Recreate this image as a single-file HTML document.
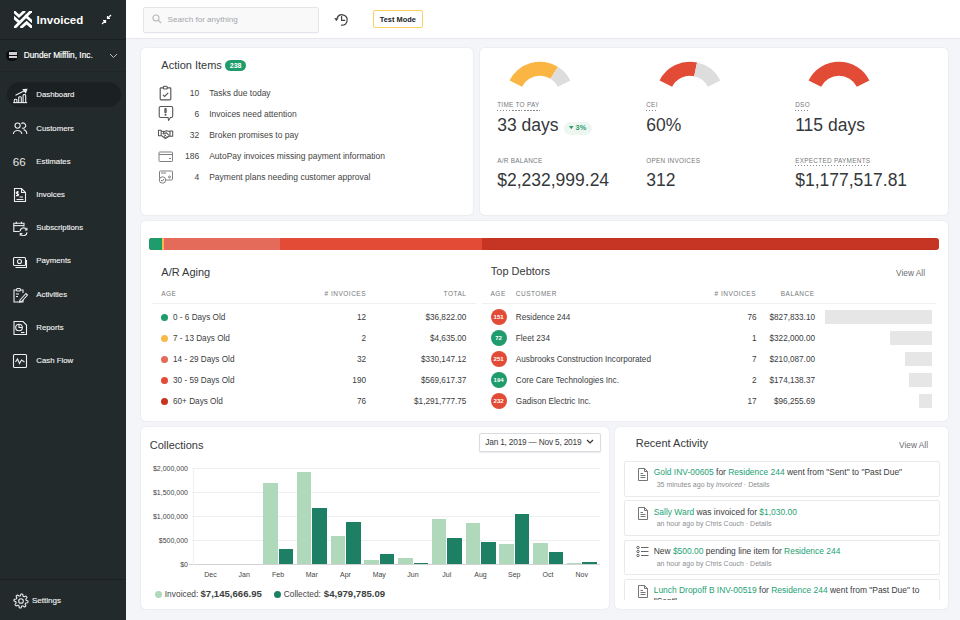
<!DOCTYPE html>
<html><head><meta charset="utf-8"><title>Invoiced Dashboard</title><style>
*{margin:0;padding:0;box-sizing:border-box}
html,body{width:960px;height:620px;overflow:hidden;background:#f4f5f9;font-family:"Liberation Sans",sans-serif}
.t{position:absolute;line-height:1;white-space:nowrap}
.b{position:absolute}
.card{position:absolute;background:#fff;border-radius:5px;box-shadow:0 0 0 1px #eceef2,0 1px 1px rgba(0,0,0,0.05)}
.lbl{text-transform:uppercase}
.g{color:#25a274}
</style></head>
<body>
<div class="b" style="left:0px;top:0px;width:126px;height:620px;background:#222a2b"></div>
<div class="b" style="left:0px;top:38.5px;width:126px;height:1px;background:#1b2123"></div>
<div class="b" style="left:0px;top:71px;width:126px;height:1px;background:#1f2528"></div>
<div class="b" style="left:0px;top:578.5px;width:126px;height:1px;background:#1b2123"></div>
<svg class="b" style="left:14.2px;top:11.2px;overflow:hidden" width="17.6" height="16.8" viewBox="0 0 17.6 16.8"><g stroke="#fff" stroke-width="2.8" fill="none" stroke-linecap="butt" stroke-linejoin="miter"><path d="M-0.5 17.8 L18 -0.8"/><path d="M-1 5.8 L6.6 12.4"/><path d="M18.6 11 L11 4.4"/><path d="M-1 -0.2 L5 5.2 L11 -0.2"/><path d="M6.6 17 L12.6 11.6 L18.6 17"/></g></svg>
<div class="t " style="top:14.67px;font-size:11.5px;color:#fff;font-weight:700;left:36.60px;">Invoiced</div>
<svg class="b" style="left:101px;top:14px;" width="11" height="11" viewBox="0 0 11 11"><g stroke="#fff" stroke-width="1.2" fill="none"><path d="M1 10 L4.5 6.5 M2 6.5 H4.5 V9"/><path d="M10 1 L6.5 4.5 M6.5 2 V4.5 H9"/></g></svg>
<div class="b" style="left:6.3px;top:49.8px;width:11.4px;height:11.6px;background:#0b0d0e;border-radius:50%"></div>
<div class="b" style="left:9px;top:52.3px;width:7.6px;height:2.4px;background:#d0d0d0"></div>
<div class="b" style="left:9px;top:55.5px;width:7.6px;height:2.4px;background:#d0d0d0"></div>
<div class="t " style="top:51.27px;font-size:8.3px;color:#fff;left:23.70px;-webkit-text-stroke:0.2px #fff;">Dunder Mifflin, Inc.</div>
<svg class="b" style="left:108.5px;top:52.5px;" width="9" height="6" viewBox="0 0 9 6"><path d="M1 1 L4.5 4.5 L8 1" stroke="#bbb" stroke-width="1" fill="none"/></svg>
<div class="b" style="left:6.5px;top:81.8px;width:114.5px;height:25.6px;background:#1b2123;border-radius:13px"></div>
<div class="t " style="top:91.40px;font-size:7.8px;color:#f2f2f2;left:36.30px;-webkit-text-stroke:0.12px #f2f2f2;">Dashboard</div>
<div class="t " style="top:124.60px;font-size:7.8px;color:#f2f2f2;left:36.30px;-webkit-text-stroke:0.12px #f2f2f2;">Customers</div>
<div class="t " style="top:157.80px;font-size:7.8px;color:#f2f2f2;left:36.30px;-webkit-text-stroke:0.12px #f2f2f2;">Estimates</div>
<div class="t " style="top:191.00px;font-size:7.8px;color:#f2f2f2;left:36.30px;-webkit-text-stroke:0.12px #f2f2f2;">Invoices</div>
<div class="t " style="top:224.20px;font-size:7.8px;color:#f2f2f2;left:36.30px;-webkit-text-stroke:0.12px #f2f2f2;">Subscriptions</div>
<div class="t " style="top:257.40px;font-size:7.8px;color:#f2f2f2;left:36.30px;-webkit-text-stroke:0.12px #f2f2f2;">Payments</div>
<div class="t " style="top:290.60px;font-size:7.8px;color:#f2f2f2;left:36.30px;-webkit-text-stroke:0.12px #f2f2f2;">Activities</div>
<div class="t " style="top:323.80px;font-size:7.8px;color:#f2f2f2;left:36.30px;-webkit-text-stroke:0.12px #f2f2f2;">Reports</div>
<div class="t " style="top:357.00px;font-size:7.8px;color:#f2f2f2;left:36.30px;-webkit-text-stroke:0.12px #f2f2f2;">Cash Flow</div>
<svg class="b" style="left:12px;top:87.5px;" width="16" height="16" viewBox="0 0 16 16"><g stroke="#eee" stroke-width="1.1" fill="none"><path d="M1.2 14.6 H15.2"/><path d="M2.3 14.6 V12 Q2.3 11.2 3.6 11.2 Q4.9 11.2 4.9 12 V14.6"/><path d="M6.7 14.6 V9.6 Q6.7 8.7 8 8.7 Q9.3 8.7 9.3 9.6 V14.6"/><path d="M11.1 14.6 V7.4 Q11.1 6.5 12.4 6.5 Q13.7 6.5 13.7 7.4 V14.6"/><path d="M3.5 7.3 L13 2.6"/><path d="M11.3 1.6 L14.8 1.3 L13.6 4.6 Z" fill="#eee"/></g></svg>
<svg class="b" style="left:12px;top:120.69999999999999px;" width="16" height="16" viewBox="0 0 16 16"><g stroke="#eee" stroke-width="1.1" fill="none"><circle cx="5.6" cy="4.6" r="2.6"/><path d="M1.4 13 C1.4 8.3 9.8 8.3 9.8 13"/><path d="M9.3 2.7 A2.6 2.6 0 1 1 10 7"/><path d="M11.6 8.6 C13.7 9.1 14.8 10.7 14.8 13"/></g></svg>
<div class="t" style="left:12.8px;top:156px;font-size:11.6px;color:#e8e8e8;letter-spacing:0px">66</div>
<svg class="b" style="left:12px;top:187.10000000000002px;" width="16" height="16" viewBox="0 0 16 16"><g stroke="#eee" stroke-width="1.1" fill="none"><path d="M2.5 1.5 H9.5 L13.5 5.5 V14.5 H2.5 Z"/><path d="M9.5 1.5 V5.5 H13.5"/><path d="M4.5 12.5 H11.5"/><path d="M7.5 10 H11"/><path d="M5.5 4 V9 M7 5 H4.8 C4 5 4 7 5.5 6.8 C7 6.8 7 9 5.5 8.6 H4"/></g></svg>
<svg class="b" style="left:12px;top:220.3px;" width="16" height="16" viewBox="0 0 16 16"><g stroke="#eee" stroke-width="1.1" fill="none"><path d="M7.6 11.5 H1.8 V3.2 H12 V6.5"/><path d="M1.8 5.6 H12"/><path d="M4.3 1.8 V4 M9.5 1.8 V4"/><path d="M8.1 11.2 A3.5 3.5 0 0 1 14.6 9.6"/><path d="M15 12.4 A3.5 3.5 0 0 1 8.5 14"/><path d="M14.9 7.8 V10 H12.8" /><path d="M8.3 15.8 V13.5 H10.4"/></g></svg>
<svg class="b" style="left:12px;top:253.5px;" width="16" height="16" viewBox="0 0 16 16"><g stroke="#eee" stroke-width="1.1" fill="none"><rect x="1.5" y="3.5" width="12" height="8" rx="1"/><circle cx="7.5" cy="7.5" r="2"/><path d="M3.5 13.5 H14.5 V6"/></g></svg>
<svg class="b" style="left:12px;top:286.70000000000005px;" width="16" height="16" viewBox="0 0 16 16"><g stroke="#eee" stroke-width="1.1" fill="none"><path d="M4 3 H2 V15 H11 V13"/><path d="M9 3 H11 V6"/><rect x="4.5" y="1.5" width="4" height="2.5" rx="1"/><path d="M4 7 H7 M4 9.5 H6"/><path d="M8 13 L14 6.5 L15.5 8 L9.5 14.5 L7.5 15 Z"/></g></svg>
<svg class="b" style="left:12px;top:319.90000000000003px;" width="16" height="16" viewBox="0 0 16 16"><g stroke="#eee" stroke-width="1.1" fill="none"><path d="M2 1.5 H11 L14.5 5 V14.5 H2 Z"/><circle cx="7" cy="7.5" r="3.3"/><path d="M7 4.2 V7.5 H10.3"/><path d="M9 12.5 H12.5"/></g></svg>
<svg class="b" style="left:12px;top:353.1px;" width="16" height="16" viewBox="0 0 16 16"><g stroke="#eee" stroke-width="1.1" fill="none"><rect x="1.5" y="1.5" width="13" height="13" rx="1"/><path d="M3.5 9 L5.5 6 L7.5 10.5 L9.5 7 L12.5 9"/></g></svg>
<svg class="b" style="left:12.5px;top:592.5px;" width="16" height="16" viewBox="0 0 16 16"><g stroke="#eee" stroke-width="1.1" fill="none"><polygon points="15.00,8.00 14.94,8.91 14.76,9.81 12.80,9.99 12.50,10.60 12.13,11.17 12.95,12.95 12.26,13.55 11.50,14.06 9.99,12.80 9.35,13.02 8.68,13.16 8.00,15.00 7.09,14.94 6.19,14.76 6.01,12.80 5.40,12.50 4.83,12.13 3.05,12.95 2.45,12.26 1.94,11.50 3.20,9.99 2.98,9.35 2.84,8.68 1.00,8.00 1.06,7.09 1.24,6.19 3.20,6.01 3.50,5.40 3.87,4.83 3.05,3.05 3.74,2.45 4.50,1.94 6.01,3.20 6.65,2.98 7.32,2.84 8.00,1.00 8.91,1.06 9.81,1.24 9.99,3.20 10.60,3.50 11.17,3.87 12.95,3.05 13.55,3.74 14.06,4.50 12.80,6.01 13.02,6.65 13.16,7.32" stroke-linejoin="round"/><circle cx="8" cy="8" r="2.3"/></g></svg>
<div class="t " style="top:596.74px;font-size:8.1px;color:#f2f2f2;left:31.90px;-webkit-text-stroke:0.12px #f2f2f2;">Settings</div>
<div class="b" style="left:126px;top:0px;width:834px;height:39px;background:#fff;border-bottom:1px solid #e6e8ec"></div>
<div class="b" style="left:143px;top:7px;width:176px;height:26px;background:#f9f9fa;border:1px solid #e4e5e8;border-radius:2px;box-shadow:0 1px 1px rgba(0,0,0,0.03)"></div>
<svg class="b" style="left:152px;top:13.5px;" width="10" height="10" viewBox="0 0 10 10"><circle cx="4" cy="4" r="3" stroke="#b8b9bb" stroke-width="1.1" fill="none"/><path d="M6.2 6.2 L9 9" stroke="#b8b9bb" stroke-width="1.2"/></svg>
<div class="t " style="top:16.14px;font-size:8.1px;color:#a4a6a9;left:167.50px;">Search for anything</div>
<svg class="b" style="left:330px;top:8px;" width="22" height="22" viewBox="0 0 22 22"><g stroke="#444" stroke-width="1.2" fill="none" stroke-linecap="round"><path d="M7.3 9.6 A5.2 5.2 0 1 1 11.6 17.2"/><path d="M11.6 8.4 V12.3 H14.8"/></g><path d="M4.4 9.9 L8.6 10.3 L6.2 13.3 Z" fill="#444"/></svg>
<div class="b" style="left:373px;top:10.3px;width:50px;height:17.3px;border:1px solid #fbd161;border-radius:2px;background:#fff"></div>
<div class="t " style="top:15.54px;font-size:7.4px;color:#222;font-weight:700;left:197.80px;width:400px;text-align:center;">Test Mode</div>
<div class="card" style="left:141px;top:48px;width:332px;height:167px"></div>
<div class="t " style="top:59.89px;font-size:11px;color:#36383a;left:161.30px;">Action Items</div>
<div class="b" style="left:225.3px;top:60.2px;width:20.5px;height:10.6px;background:#1f9c6b;border-radius:6px"></div>
<div class="t " style="top:62.27px;font-size:7px;color:#fff;font-weight:700;left:35.60px;width:400px;text-align:center;">238</div>
<div class="t " style="top:89.40px;font-size:8.5px;color:#444;right:760.80px;">10</div>
<div class="t " style="top:89.40px;font-size:8.5px;color:#444;left:209.20px;">Tasks due today</div>
<div class="t " style="top:110.40px;font-size:8.5px;color:#444;right:760.80px;">6</div>
<div class="t " style="top:110.40px;font-size:8.5px;color:#444;left:209.20px;">Invoices need attention</div>
<div class="t " style="top:131.40px;font-size:8.5px;color:#444;right:760.80px;">32</div>
<div class="t " style="top:131.40px;font-size:8.5px;color:#444;left:209.20px;">Broken promises to pay</div>
<div class="t " style="top:152.40px;font-size:8.5px;color:#444;right:760.80px;">186</div>
<div class="t " style="top:152.40px;font-size:8.5px;color:#444;left:209.20px;">AutoPay invoices missing payment information</div>
<div class="t " style="top:173.40px;font-size:8.5px;color:#444;right:760.80px;">4</div>
<div class="t " style="top:173.40px;font-size:8.5px;color:#444;left:209.20px;">Payment plans needing customer approval</div>
<svg class="b" style="left:159px;top:85px;" width="13" height="16" viewBox="0 0 13 16"><g stroke="#555" stroke-width="1.15" fill="none"><rect x="1.2" y="2.8" width="10.6" height="12" rx="0.8"/><rect x="4.4" y="1.2" width="3.9" height="2.8" rx="1" fill="#fff"/><path d="M3.9 9.9 L5.6 11.4 L9.2 7.8"/></g></svg>
<svg class="b" style="left:158px;top:105px;" width="16" height="16" viewBox="0 0 16 16"><g stroke="#555" stroke-width="1.1" fill="none"><path d="M2.7 1.5 H13.2 Q14.7 1.5 14.7 3 V11 Q14.7 12.5 13.2 12.5 H12.4 L10.6 15.2 L10 12.5 H2.7 Q1.2 12.5 1.2 11 V3 Q1.2 1.5 2.7 1.5 Z"/><rect x="6.9" y="3.6" width="1.2" height="4.2" rx="0.5"/><circle cx="7.5" cy="9.7" r="0.5"/></g></svg>
<svg class="b" style="left:155px;top:126px;" width="21" height="16" viewBox="0 0 21 16"><g stroke="#555" stroke-width="1.05" fill="none" stroke-linejoin="round"><rect x="3.5" y="4.2" width="2.7" height="5.6"/><rect x="15" y="4.9" width="2.7" height="5.4"/><path d="M6.2 5.3 L9.3 5.6 L11.5 4.8 L15 5.5"/><path d="M6.2 9.3 L10.3 12.5 L15 9.7"/><path d="M9.3 5.6 L8 7.6 C9 8.6 10.3 7.3 11.2 6.6 L14 9.3"/><path d="M8.8 10.6 L11 8.8 M10.5 11.8 L12.5 10.3"/></g></svg>
<svg class="b" style="left:158px;top:150.5px;" width="15" height="11" viewBox="0 0 15 11"><g stroke="#808080" stroke-width="1" fill="none"><rect x="1" y="1" width="13.5" height="9.5" rx="0.7"/><path d="M1 3.5 H14.5"/><path d="M11 7.5 H13"/></g></svg>
<svg class="b" style="left:158px;top:170px;" width="15" height="14" viewBox="0 0 15 14"><g stroke="#808080" stroke-width="1" fill="none"><rect x="1.5" y="1" width="13" height="9" rx="0.7"/><path d="M3 3 H8"/><circle cx="11.5" cy="7" r="1"/><circle cx="4.5" cy="10" r="3.2" fill="#fff"/><path d="M3 10 L4.2 11.2 L6 9"/></g></svg>
<div class="card" style="left:480px;top:48px;width:468px;height:167px"></div>
<svg class="b" style="left:500px;top:50px;" width="80" height="40" viewBox="0 0 80 40"><path d="M9.57 30.53 A34 34 0 0 1 57.89 16.79 L50.52 28.69 A20 20 0 0 0 22.10 36.78 Z" fill="#fbb543"/><path d="M57.89 16.79 A34 34 0 0 1 70.43 30.53 L57.90 36.78 A20 20 0 0 0 50.52 28.69 Z" fill="#dddddd"/></svg>
<svg class="b" style="left:649.7px;top:50px;" width="80" height="40" viewBox="0 0 80 40"><path d="M9.57 30.53 A34 34 0 0 1 47.03 12.44 L44.14 26.13 A20 20 0 0 0 22.10 36.78 Z" fill="#e24b36"/><path d="M47.03 12.44 A34 34 0 0 1 70.43 30.53 L57.90 36.78 A20 20 0 0 0 44.14 26.13 Z" fill="#dddddd"/></svg>
<svg class="b" style="left:798.9px;top:50px;" width="80" height="40" viewBox="0 0 80 40"><path d="M9.57 30.53 A34 34 0 0 1 70.43 30.53 L57.90 36.78 A20 20 0 0 0 22.10 36.78 Z" fill="#e24b36"/></svg>
<div class="t " style="top:102.38px;font-size:6.4px;color:#76787b;letter-spacing:0.28px;left:497.20px;padding-bottom:2px;background-image:repeating-linear-gradient(90deg,#8a8c8f 0 1.5px,transparent 1.5px 3px);background-size:100% 1px;background-repeat:no-repeat;background-position:0 100%;">TIME TO PAY</div>
<div class="t " style="top:116.69px;font-size:17.5px;color:#35383b;left:497.20px;">33 days</div>
<div class="t " style="top:157.98px;font-size:6.4px;color:#76787b;letter-spacing:0.28px;left:497.20px;">A/R BALANCE</div>
<div class="t " style="top:171.79px;font-size:17.5px;color:#35383b;left:497.20px;">$2,232,999.24</div>
<div class="t " style="top:102.38px;font-size:6.4px;color:#76787b;letter-spacing:0.28px;left:646.20px;padding-bottom:2px;background-image:repeating-linear-gradient(90deg,#8a8c8f 0 1.5px,transparent 1.5px 3px);background-size:100% 1px;background-repeat:no-repeat;background-position:0 100%;">CEI</div>
<div class="t " style="top:116.69px;font-size:17.5px;color:#35383b;left:646.20px;">60%</div>
<div class="t " style="top:157.98px;font-size:6.4px;color:#76787b;letter-spacing:0.28px;left:646.20px;">OPEN INVOICES</div>
<div class="t " style="top:171.79px;font-size:17.5px;color:#35383b;left:646.20px;">312</div>
<div class="t " style="top:102.38px;font-size:6.4px;color:#76787b;letter-spacing:0.28px;left:795.20px;padding-bottom:2px;background-image:repeating-linear-gradient(90deg,#8a8c8f 0 1.5px,transparent 1.5px 3px);background-size:100% 1px;background-repeat:no-repeat;background-position:0 100%;">DSO</div>
<div class="t " style="top:116.69px;font-size:17.5px;color:#35383b;left:795.20px;">115 days</div>
<div class="t " style="top:157.98px;font-size:6.4px;color:#76787b;letter-spacing:0.28px;left:795.20px;padding-bottom:2px;background-image:repeating-linear-gradient(90deg,#8a8c8f 0 1.5px,transparent 1.5px 3px);background-size:100% 1px;background-repeat:no-repeat;background-position:0 100%;">EXPECTED PAYMENTS</div>
<div class="t " style="top:171.79px;font-size:17.5px;color:#35383b;left:795.20px;">$1,177,517.81</div>
<div class="b" style="left:564px;top:121.5px;width:28px;height:13.5px;background:#eef6f1;border-radius:7px"></div>
<svg class="b" style="left:569px;top:126px;" width="5" height="3.2" viewBox="0 0 5 3.2"><path d="M0 0 H4.5 L2.25 3.2 Z" fill="#1f9c6b"/></svg>
<div class="t " style="top:124.42px;font-size:7.3px;color:#2a9d6a;font-weight:700;left:575.60px;">3%</div>
<div class="card" style="left:141px;top:221px;width:807px;height:200px"></div>
<div class="b" style="left:149px;top:238px;width:790px;height:12px;border-radius:3px;overflow:hidden;background:#c63423"><div class="b" style="left:0;top:0;width:13px;height:12px;background:#1f9c6b"></div><div class="b" style="left:13px;top:0;width:2px;height:12px;background:#f9b84a"></div><div class="b" style="left:15px;top:0;width:116px;height:12px;background:#e46a5a"></div><div class="b" style="left:131px;top:0;width:202px;height:12px;background:#e34b37"></div></div>
<div class="t " style="top:266.69px;font-size:11px;color:#36383a;left:161.30px;">A/R Aging</div>
<div class="t " style="top:291.00px;font-size:6.5px;color:#76787b;letter-spacing:0.5px;left:161.20px;">AGE</div>
<div class="t " style="top:291.00px;font-size:6.5px;color:#76787b;letter-spacing:0.5px;right:594.00px;"># INVOICES</div>
<div class="t " style="top:291.00px;font-size:6.5px;color:#76787b;letter-spacing:0.5px;right:493.60px;">TOTAL</div>
<div class="b" style="left:151.7px;top:303px;width:324.3px;height:1px;background:#eeeff1"></div>
<div class="b" style="left:160.8px;top:314.1px;width:7px;height:7px;background:#1f9c6b;border-radius:50%"></div>
<div class="t " style="top:313.86px;font-size:8.2px;color:#3a3c3e;left:173.00px;">0 - 6 Days Old</div>
<div class="t " style="top:313.86px;font-size:8.2px;color:#3a3c3e;right:594.00px;">12</div>
<div class="t " style="top:313.86px;font-size:8.2px;color:#3a3c3e;right:493.60px;">$36,822.00</div>
<div class="b" style="left:160.8px;top:335.1px;width:7px;height:7px;background:#f9b84a;border-radius:50%"></div>
<div class="t " style="top:334.86px;font-size:8.2px;color:#3a3c3e;left:173.00px;">7 - 13 Days Old</div>
<div class="t " style="top:334.86px;font-size:8.2px;color:#3a3c3e;right:594.00px;">2</div>
<div class="t " style="top:334.86px;font-size:8.2px;color:#3a3c3e;right:493.60px;">$4,635.00</div>
<div class="b" style="left:160.8px;top:356.1px;width:7px;height:7px;background:#e46a5a;border-radius:50%"></div>
<div class="t " style="top:355.86px;font-size:8.2px;color:#3a3c3e;left:173.00px;">14 - 29 Days Old</div>
<div class="t " style="top:355.86px;font-size:8.2px;color:#3a3c3e;right:594.00px;">32</div>
<div class="t " style="top:355.86px;font-size:8.2px;color:#3a3c3e;right:493.60px;">$330,147.12</div>
<div class="b" style="left:160.8px;top:377.1px;width:7px;height:7px;background:#e34b37;border-radius:50%"></div>
<div class="t " style="top:376.86px;font-size:8.2px;color:#3a3c3e;left:173.00px;">30 - 59 Days Old</div>
<div class="t " style="top:376.86px;font-size:8.2px;color:#3a3c3e;right:594.00px;">190</div>
<div class="t " style="top:376.86px;font-size:8.2px;color:#3a3c3e;right:493.60px;">$569,617.37</div>
<div class="b" style="left:160.8px;top:398.1px;width:7px;height:7px;background:#c63423;border-radius:50%"></div>
<div class="t " style="top:397.86px;font-size:8.2px;color:#3a3c3e;left:173.00px;">60+ Days Old</div>
<div class="t " style="top:397.86px;font-size:8.2px;color:#3a3c3e;right:594.00px;">76</div>
<div class="t " style="top:397.86px;font-size:8.2px;color:#3a3c3e;right:493.60px;">$1,291,777.75</div>
<div class="t " style="top:265.99px;font-size:11px;color:#36383a;left:490.80px;">Top Debtors</div>
<div class="t " style="top:268.97px;font-size:8.3px;color:#6b6d70;right:35.00px;">View All</div>
<div class="t " style="top:290.80px;font-size:6.5px;color:#76787b;letter-spacing:0.5px;left:490.50px;">AGE</div>
<div class="t " style="top:290.80px;font-size:6.5px;color:#76787b;letter-spacing:0.5px;left:515.80px;">CUSTOMER</div>
<div class="t " style="top:290.80px;font-size:6.5px;color:#76787b;letter-spacing:0.5px;right:204.00px;"># INVOICES</div>
<div class="t " style="top:290.80px;font-size:6.5px;color:#76787b;letter-spacing:0.5px;right:145.40px;">BALANCE</div>
<div class="b" style="left:481.7px;top:303px;width:454px;height:1px;background:#eeeff1"></div>
<div class="b" style="left:490.5px;top:309.20000000000005px;width:16px;height:16px;background:#e24b36;border-radius:50%"></div>
<div class="t " style="top:314.24px;font-size:6.1px;color:#fff;font-weight:700;left:298.60px;width:400px;text-align:center;">151</div>
<div class="t " style="top:313.66px;font-size:8.2px;color:#3a3c3e;left:515.80px;">Residence 244</div>
<div class="t " style="top:313.66px;font-size:8.2px;color:#3a3c3e;right:203.50px;">76</div>
<div class="t " style="top:313.66px;font-size:8.2px;color:#3a3c3e;right:145.00px;">$827,833.10</div>
<div class="b" style="left:824.8px;top:310.30000000000007px;width:107.0px;height:14px;background:#e6e6e7"></div>
<div class="b" style="left:490.5px;top:330.20000000000005px;width:16px;height:16px;background:#1f9c6b;border-radius:50%"></div>
<div class="t " style="top:335.24px;font-size:6.1px;color:#fff;font-weight:700;left:298.60px;width:400px;text-align:center;">72</div>
<div class="t " style="top:334.66px;font-size:8.2px;color:#3a3c3e;left:515.80px;">Fleet 234</div>
<div class="t " style="top:334.66px;font-size:8.2px;color:#3a3c3e;right:203.50px;">1</div>
<div class="t " style="top:334.66px;font-size:8.2px;color:#3a3c3e;right:145.00px;">$322,000.00</div>
<div class="b" style="left:890.1804996441915px;top:331.30000000000007px;width:41.619500355808434px;height:14px;background:#e6e6e7"></div>
<div class="b" style="left:490.5px;top:351.20000000000005px;width:16px;height:16px;background:#e24b36;border-radius:50%"></div>
<div class="t " style="top:356.24px;font-size:6.1px;color:#fff;font-weight:700;left:298.60px;width:400px;text-align:center;">251</div>
<div class="t " style="top:355.66px;font-size:8.2px;color:#3a3c3e;left:515.80px;">Ausbrooks Construction Incorporated</div>
<div class="t " style="top:355.66px;font-size:8.2px;color:#3a3c3e;right:203.50px;">7</div>
<div class="t " style="top:355.66px;font-size:8.2px;color:#3a3c3e;right:145.00px;">$210,087.00</div>
<div class="b" style="left:904.6456025737555px;top:352.30000000000007px;width:27.154397426244493px;height:14px;background:#e6e6e7"></div>
<div class="b" style="left:490.5px;top:372.20000000000005px;width:16px;height:16px;background:#1f9c6b;border-radius:50%"></div>
<div class="t " style="top:377.24px;font-size:6.1px;color:#fff;font-weight:700;left:298.60px;width:400px;text-align:center;">194</div>
<div class="t " style="top:376.66px;font-size:8.2px;color:#3a3c3e;left:515.80px;">Core Care Technologies Inc.</div>
<div class="t " style="top:376.66px;font-size:8.2px;color:#3a3c3e;right:203.50px;">2</div>
<div class="t " style="top:376.66px;font-size:8.2px;color:#3a3c3e;right:145.00px;">$174,138.37</div>
<div class="b" style="left:909.2920746826866px;top:373.30000000000007px;width:22.507925317313358px;height:14px;background:#e6e6e7"></div>
<div class="b" style="left:490.5px;top:393.20000000000005px;width:16px;height:16px;background:#e24b36;border-radius:50%"></div>
<div class="t " style="top:398.24px;font-size:6.1px;color:#fff;font-weight:700;left:298.60px;width:400px;text-align:center;">232</div>
<div class="t " style="top:397.66px;font-size:8.2px;color:#3a3c3e;left:515.80px;">Gadison Electric Inc.</div>
<div class="t " style="top:397.66px;font-size:8.2px;color:#3a3c3e;right:203.50px;">17</div>
<div class="t " style="top:397.66px;font-size:8.2px;color:#3a3c3e;right:145.00px;">$96,255.69</div>
<div class="b" style="left:919.3586530304236px;top:394.30000000000007px;width:12.441346969576356px;height:14px;background:#e6e6e7"></div>
<div class="card" style="left:141px;top:427px;width:468px;height:182px"></div>
<div class="t " style="top:439.89px;font-size:11px;color:#36383a;left:149.70px;">Collections</div>
<div class="b" style="left:478.5px;top:433px;width:122px;height:18.5px;border:1px solid #d9dbde;border-radius:2px;background:#fff;box-shadow:0 1px 1px #e8eaee"></div>
<div class="t " style="top:438.27px;font-size:8.3px;color:#3a3c3e;letter-spacing:-0.2px;left:485.30px;">Jan 1, 2019 — Nov 5, 2019</div>
<svg class="b" style="left:585.5px;top:439px;" width="8" height="5.5" viewBox="0 0 8 5.5"><path d="M1 1 L4 4 L7 1" stroke="#333" stroke-width="1.2" fill="none"/></svg>
<div class="b" style="left:191.5px;top:468.25px;width:408px;height:1px;background:#efefef"></div>
<div class="t " style="top:465.42px;font-size:7px;color:#444;right:772.00px;">$2,000,000</div>
<div class="b" style="left:191.5px;top:492.0px;width:408px;height:1px;background:#efefef"></div>
<div class="t " style="top:489.17px;font-size:7px;color:#444;right:772.00px;">$1,500,000</div>
<div class="b" style="left:191.5px;top:515.75px;width:408px;height:1px;background:#efefef"></div>
<div class="t " style="top:512.92px;font-size:7px;color:#444;right:772.00px;">$1,000,000</div>
<div class="b" style="left:191.5px;top:539.5px;width:408px;height:1px;background:#efefef"></div>
<div class="t " style="top:536.67px;font-size:7px;color:#444;right:772.00px;">$500,000</div>
<div class="b" style="left:191.5px;top:563.75px;width:408px;height:1px;background:#efefef"></div>
<div class="t " style="top:560.92px;font-size:7px;color:#444;right:772.00px;">$0</div>
<div class="b" style="left:188.5px;top:563.75px;width:411px;height:1px;background:#d2d3d5"></div>
<div class="b" style="left:193px;top:468.5px;width:1px;height:96px;background:#efefef"></div>
<div class="t " style="top:571.07px;font-size:7px;color:#444;left:10.50px;width:400px;text-align:center;">Dec</div>
<div class="t " style="top:571.07px;font-size:7px;color:#444;left:44.25px;width:400px;text-align:center;">Jan</div>
<div class="t " style="top:571.07px;font-size:7px;color:#444;left:78.00px;width:400px;text-align:center;">Feb</div>
<div class="b" style="left:263.23px;top:483.27px;width:14.3px;height:80.98px;background:#b0d8bb"></div>
<div class="b" style="left:278.73px;top:548.73px;width:14.3px;height:15.52px;background:#1d7f64"></div>
<div class="t " style="top:571.07px;font-size:7px;color:#444;left:111.75px;width:400px;text-align:center;">Mar</div>
<div class="b" style="left:296.98px;top:471.76px;width:14.3px;height:92.49px;background:#b0d8bb"></div>
<div class="b" style="left:312.48px;top:508.0px;width:14.3px;height:56.25px;background:#1d7f64"></div>
<div class="t " style="top:571.07px;font-size:7px;color:#444;left:145.50px;width:400px;text-align:center;">Apr</div>
<div class="b" style="left:330.73px;top:535.74px;width:14.3px;height:28.51px;background:#b0d8bb"></div>
<div class="b" style="left:346.23px;top:521.75px;width:14.3px;height:42.5px;background:#1d7f64"></div>
<div class="t " style="top:571.07px;font-size:7px;color:#444;left:179.25px;width:400px;text-align:center;">May</div>
<div class="b" style="left:364.48px;top:560.0px;width:14.3px;height:4.25px;background:#b0d8bb"></div>
<div class="b" style="left:379.98px;top:554.27px;width:14.3px;height:9.98px;background:#1d7f64"></div>
<div class="t " style="top:571.07px;font-size:7px;color:#444;left:213.00px;width:400px;text-align:center;">Jun</div>
<div class="b" style="left:398.23px;top:557.99px;width:14.3px;height:6.26px;background:#b0d8bb"></div>
<div class="b" style="left:413.73px;top:563.01px;width:14.3px;height:1.24px;background:#1d7f64"></div>
<div class="t " style="top:571.07px;font-size:7px;color:#444;left:246.75px;width:400px;text-align:center;">Jul</div>
<div class="b" style="left:431.98px;top:518.74px;width:14.3px;height:45.51px;background:#b0d8bb"></div>
<div class="b" style="left:447.48px;top:537.99px;width:14.3px;height:26.26px;background:#1d7f64"></div>
<div class="t " style="top:571.07px;font-size:7px;color:#444;left:280.50px;width:400px;text-align:center;">Aug</div>
<div class="b" style="left:465.73px;top:523.23px;width:14.3px;height:41.02px;background:#b0d8bb"></div>
<div class="b" style="left:481.23px;top:542.0px;width:14.3px;height:22.25px;background:#1d7f64"></div>
<div class="t " style="top:571.07px;font-size:7px;color:#444;left:314.25px;width:400px;text-align:center;">Sep</div>
<div class="b" style="left:499.48px;top:544.24px;width:14.3px;height:20.01px;background:#b0d8bb"></div>
<div class="b" style="left:514.98px;top:514.26px;width:14.3px;height:49.99px;background:#1d7f64"></div>
<div class="t " style="top:571.07px;font-size:7px;color:#444;left:348.00px;width:400px;text-align:center;">Oct</div>
<div class="b" style="left:533.23px;top:543.0px;width:14.3px;height:21.25px;background:#b0d8bb"></div>
<div class="b" style="left:548.73px;top:551.74px;width:14.3px;height:12.51px;background:#1d7f64"></div>
<div class="t " style="top:571.07px;font-size:7px;color:#444;left:381.75px;width:400px;text-align:center;">Nov</div>
<div class="b" style="left:566.98px;top:563.01px;width:14.3px;height:1.24px;background:#b0d8bb"></div>
<div class="b" style="left:582.48px;top:562.01px;width:14.3px;height:2.24px;background:#1d7f64"></div>
<div class="b" style="left:155.2px;top:591px;width:7px;height:7px;background:#b0d8bb;border-radius:50%"></div>
<div class="t " style="top:590.39px;font-size:8.4px;color:#444;left:164.80px;">Invoiced:</div>
<div class="t " style="top:588.87px;font-size:9.6px;color:#3d3f41;font-weight:700;left:200.50px;">$7,145,666.95</div>
<div class="b" style="left:273.7px;top:591px;width:7px;height:7px;background:#1d7f64;border-radius:50%"></div>
<div class="t " style="top:590.39px;font-size:8.4px;color:#444;left:283.70px;">Collected:</div>
<div class="t " style="top:588.87px;font-size:9.6px;color:#3d3f41;font-weight:700;left:323.80px;">$4,979,785.09</div>
<div class="card" style="left:615px;top:427px;width:333px;height:182px"></div>
<div class="t " style="top:437.69px;font-size:11px;color:#36383a;left:635.80px;">Recent Activity</div>
<div class="t " style="top:440.57px;font-size:8.3px;color:#6b6d70;right:32.00px;">View All</div>
<div class="b" style="left:616px;top:455px;width:332px;height:145px;overflow:hidden">
<div class="b" style="left:8.2px;top:6px;width:315.6px;height:35.5px;border:1px solid #e9eaec;border-radius:2px;background:#fff"></div>
<svg class="b" style="left:20.5px;top:12.5px" width="12" height="13" viewBox="0 0 12 13"><g stroke="#666" stroke-width="0.9" fill="none"><path d="M1.5 0.5 H7.5 L10.5 3.5 V12.5 H1.5 Z"/><path d="M7.5 0.5 V3.5 H10.5"/><path d="M3.5 5.5 H6 M3.5 7.5 H8.5 M3.5 9.5 H8.5"/></g></svg>
<div class="t" style="left:37.7px;top:13.35px;font-size:8.45px;color:#3a3c3e"><span class="g">Gold INV-00605</span> for <span class="g">Residence 244</span> went from "Sent" to "Past Due"</div>
<div class="t" style="left:40.7px;top:26.07px;font-size:7.0px;color:#8b8d90">35 minutes ago by <i>Invoiced</i> · Details</div>
<div class="b" style="left:8.2px;top:45.30000000000001px;width:315.6px;height:35.5px;border:1px solid #e9eaec;border-radius:2px;background:#fff"></div>
<svg class="b" style="left:20.5px;top:51.80000000000001px" width="12" height="13" viewBox="0 0 12 13"><g stroke="#666" stroke-width="0.9" fill="none"><path d="M1.5 0.5 H7.5 L10.5 3.5 V12.5 H1.5 Z"/><path d="M7.5 0.5 V3.5 H10.5"/><path d="M3.5 5.5 H6 M3.5 7.5 H8.5 M3.5 9.5 H8.5"/></g></svg>
<div class="t" style="left:37.7px;top:52.65px;font-size:8.45px;color:#3a3c3e"><span class="g">Sally Ward</span> was invoiced for <span class="g">$1,030.00</span></div>
<div class="t" style="left:40.7px;top:65.37px;font-size:7.0px;color:#8b8d90">an hour ago by Chris Couch · Details</div>
<div class="b" style="left:8.2px;top:84.60000000000002px;width:315.6px;height:35.5px;border:1px solid #e9eaec;border-radius:2px;background:#fff"></div>
<svg class="b" style="left:19.5px;top:90.10000000000002px" width="13" height="13" viewBox="0 0 13 13"><g stroke="#555" stroke-width="0.9" fill="none"><circle cx="2" cy="2.5" r="1.2"/><circle cx="2" cy="6.5" r="1.2"/><circle cx="2" cy="10.5" r="1.2"/><path d="M5 2.5 H12.5 M5 6.5 H12.5 M5 10.5 H12.5"/></g></svg>
<div class="t" style="left:37.7px;top:91.95px;font-size:8.45px;color:#3a3c3e">New <span class="g">$500.00</span> pending line item for <span class="g">Residence 244</span></div>
<div class="t" style="left:40.7px;top:104.67px;font-size:7.0px;color:#8b8d90">an hour ago by Chris Couch · Details</div>
<div class="b" style="left:8.2px;top:123.5px;width:315.6px;height:35.5px;border:1px solid #e9eaec;border-radius:2px;background:#fff"></div>
<svg class="b" style="left:20.5px;top:130.0px" width="12" height="13" viewBox="0 0 12 13"><g stroke="#666" stroke-width="0.9" fill="none"><path d="M1.5 0.5 H7.5 L10.5 3.5 V12.5 H1.5 Z"/><path d="M7.5 0.5 V3.5 H10.5"/><path d="M3.5 5.5 H6 M3.5 7.5 H8.5 M3.5 9.5 H8.5"/></g></svg>
<div class="t" style="left:37.7px;top:130.85px;font-size:8.45px;color:#3a3c3e"><span class="g">Lunch Dropoff B INV-00519</span> for <span class="g">Residence 244</span> went from "Past Due" to</div>
<div class="t" style="left:37.7px;top:142.35px;font-size:8.45px;color:#3a3c3e">"Sent"</div>
</div>
</body></html>
